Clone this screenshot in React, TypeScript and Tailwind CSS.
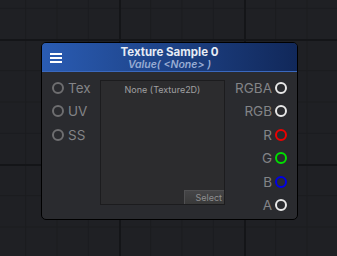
import React from "react";

const inputs = ["Tex", "UV", "SS"];
const outputs: { label: string; color: string }[] = [
  { label: "RGBA", color: "border-[#e8e8e8]" },
  { label: "RGB", color: "border-[#e8e8e8]" },
  { label: "R", color: "border-[#ee0000]" },
  { label: "G", color: "border-[#00e000]" },
  { label: "B", color: "border-[#0000e6]" },
  { label: "A", color: "border-[#e8e8e8]" },
];

export default function App() {
  return (
    <div
      className="w-[337px] h-[256px] overflow-hidden bg-[#1f2024] [background-image:linear-gradient(to_right,#141518_2px,transparent_2px),linear-gradient(to_bottom,#141518_2px,transparent_2px),linear-gradient(to_right,#1a1b1e_1px,transparent_1px),linear-gradient(to_bottom,#1a1b1e_1px,transparent_1px)] [background-size:125px_125px,125px_125px,31.25px_31.25px,31.25px_31.25px] [background-position:119px_39px,119px_39px,119px_39px,119px_39px] pl-[41px] pt-[42px]"
      style={{ fontFamily: "Inter, 'Noto Sans', sans-serif" }}
    >
      <div className="w-[257px] h-[178px] border border-black rounded-[5px] bg-[#2a2b2f] overflow-hidden flex flex-col">
        <div className="h-[29px] shrink-0 flex items-center bg-[linear-gradient(to_right,#2a5cb3,#11285a)] border-b border-[#3a68bd] relative">
          <div className="absolute left-[8px] top-[10px] flex flex-col gap-[2px]">
            <div className="w-[12px] h-[2px] bg-white" />
            <div className="w-[12px] h-[2px] bg-white" />
            <div className="w-[12px] h-[2px] bg-white" />
          </div>
          <div className="flex-1 flex flex-col items-center leading-none pt-[2px]">
            <div className="text-[11.5px] font-bold text-[#e6ebf4] leading-[13px]">Texture Sample 0</div>
            <div className="text-[10.5px] font-semibold italic text-[#98acd3] leading-[12px]">Value( &lt;None&gt; )</div>
          </div>
        </div>
        <div className="flex items-start pl-[10px] pr-[10px]">
          <div className="w-[48px] pt-[4px] flex flex-col">
            {inputs.map((l) => (
              <div key={l} className="h-[23.5px] flex items-center gap-[4px]">
                <div className="w-[12px] h-[12px] rounded-full border-[2.5px] border-[#6e6e70]" />
                <span className="text-[13.5px] text-[#838487]">{l}</span>
              </div>
            ))}
          </div>
          <div className="mt-[8px] w-[125px] h-[125px] border border-[#1c1c1e] bg-[#2c2c2e] flex flex-col justify-between items-center">
            <div className="text-[9px] text-[#a0a0a2] pt-[2px]">None (Texture2D)</div>
            <div className="self-end w-[40px] h-[14px] bg-[linear-gradient(to_bottom,#454547,#393939)] border-t border-l border-[#505052] text-[9px] text-[#8e8e90] flex items-center justify-end pr-[2px]">
              Select
            </div>
          </div>
          <div className="flex-1 pt-[4px] flex flex-col items-end">
            {outputs.map((o) => (
              <div key={o.label} className="h-[23.5px] flex items-center gap-[3px]">
                <span className="text-[13.5px] text-[#838487]">{o.label}</span>
                <div className={`w-[12px] h-[12px] rounded-full border-[2.5px] ${o.color}`} />
              </div>
            ))}
          </div>
        </div>
      </div>
    </div>
  );
}
